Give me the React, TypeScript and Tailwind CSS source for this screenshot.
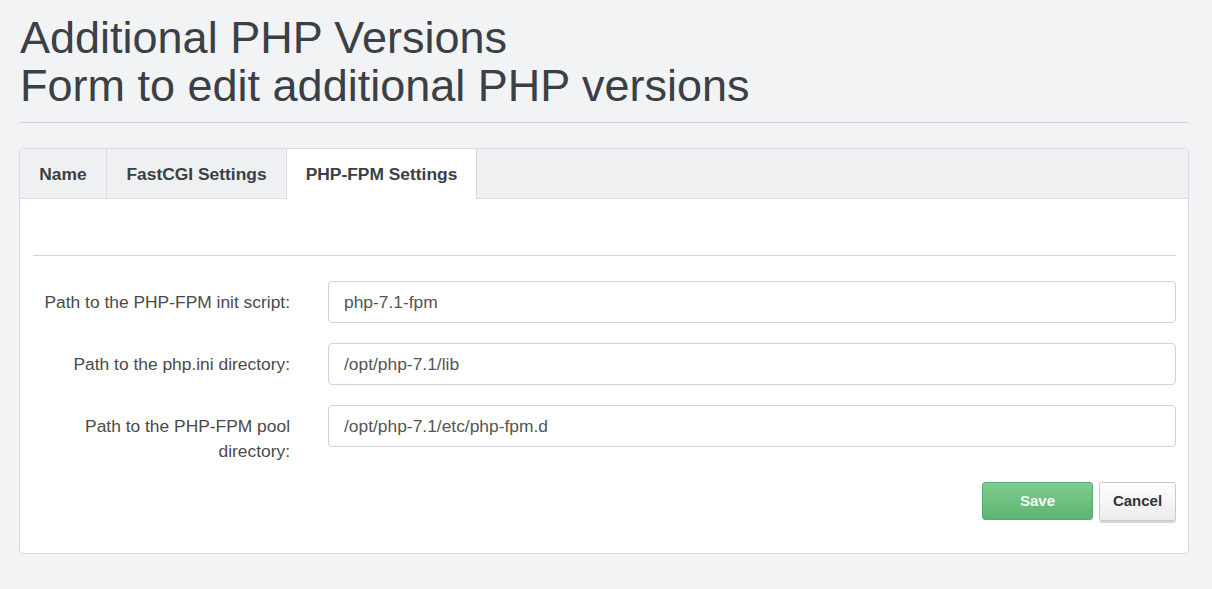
export default function App() {
  const rows = [
    { label: "Path to the PHP-FPM init script:", value: "php-7.1-fpm" },
    { label: "Path to the php.ini directory:", value: "/opt/php-7.1/lib" },
    { label: "Path to the PHP-FPM pool directory:", value: "/opt/php-7.1/etc/php-fpm.d" },
  ];

  return (
    <div className="min-h-[589px] bg-[#f2f3f5] pl-[19px] pr-[23px] pt-[14px] font-['Liberation_Sans',Arial,sans-serif]">
      <h1 className="pl-px text-[45px] leading-[48px] font-normal text-[#3a4046]">
        Additional PHP Versions
        <br />
        Form to edit additional PHP versions
      </h1>
      <hr className="mt-[12px] border-t border-[#d3d6d9]" />

      <div className="mt-[25px] rounded-[4px] border border-[#d9dce0] bg-white">
        <div className="flex h-[50px] rounded-t-[4px] border-b border-[#d9dce0] bg-[#eff0f2]">
          <div className="flex w-[87px] items-center justify-center border-r border-[#d9dce0] pt-px text-[17.4px] font-bold text-[#3b4046]">
            Name
          </div>
          <div className="flex w-[180px] items-center justify-center border-r border-[#d9dce0] pt-px text-[17.4px] font-bold text-[#3b4046]">
            FastCGI Settings
          </div>
          <div className="-mb-px flex w-[190px] items-center justify-center border-r border-[#d9dce0] bg-white text-[17.4px] font-bold text-[#3b4046]">
            PHP-FPM Settings
          </div>
        </div>

        <div className="pl-[13px] pr-[12px] pt-[56px] pb-[32px]">
          <hr className="border-t border-[#d3d6d9]" />
          <div className="mt-[25px] flex flex-col gap-[20px]">
            {rows.map((r) => (
              <div key={r.label} className="grid grid-cols-[257px_1fr] items-start gap-x-[38px]">
                <label className="pt-[9px] text-right text-[17.4px] leading-[25px] text-[#4a4a4a]">
                  {r.label}
                </label>
                <input
                  readOnly
                  value={r.value}
                  className="h-[42px] w-full rounded-[4px] border border-[#cfd3d7] px-[15px] text-[17.4px] text-[#555] outline-none"
                />
              </div>
            ))}
          </div>
          <div className="mt-[18px] flex justify-end gap-[6px]">
            <button className="h-[38px] w-[111px] rounded-[3px] border border-[#5aac6c] bg-linear-to-b from-[#7ecc8f] to-[#5db470] text-[15px] font-bold text-[#f4fff4]">
              Save
            </button>
            <button className="h-[39px] w-[77px] rounded-[3px] border border-[#c9c9c9] bg-linear-to-b from-white to-[#ececec] text-[15px] font-bold text-[#333] shadow-[0_2px_0_#d6d6d6]">
              Cancel
            </button>
          </div>
        </div>
      </div>
    </div>
  );
}
